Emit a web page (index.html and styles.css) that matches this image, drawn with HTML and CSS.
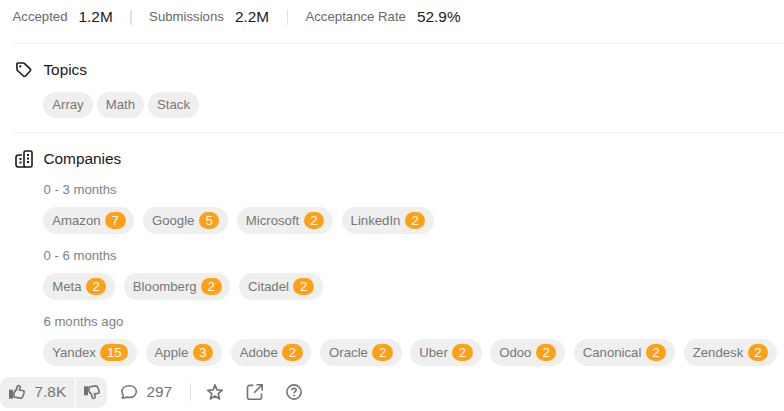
FILE: index.html
```html
<!DOCTYPE html>
<html lang="en">
<head>
<meta charset="utf-8">
<title>Problem details</title>
<link rel="stylesheet" href="styles.css">
</head>
<body>
<main class="details">
  <section class="stats">
    <span class="label">Accepted</span><span class="value">1.2M</span><i class="divider wide"></i>
    <span class="label">Submissions</span><span class="value">2.2M</span><i class="divider"></i>
    <span class="label">Acceptance Rate</span><span class="value">52.9%</span>
  </section>
  <section class="topics">
    <h2><svg viewBox="0 0 18 18"><path d="M1.900 3a1 1 0 0 1 1-1h5.400a1.500 1.500 0 0 1 1 .4l5.900 5.500a1.500 1.500 0 0 1 0 2.100l-4.700 5a1.500 1.500 0 0 1-2.100 0L2.500 9.500a1.500 1.500 0 0 1-.5-1z"/><circle class="solid" cx="5.300" cy="5.400" r="1.100"/></svg>Topics</h2>
    <div class="tags"><span class="pill">Array</span><span class="pill">Math</span><span class="pill">Stack</span></div>
  </section>
  <section class="companies">
    <h2><svg viewBox="0 0 18 18"><rect x="9" y="1" width="8" height="16" rx="1.6"/><path d="M7 5H3.300A2.300 2.300 0 0 0 1 7.300v7.400A2.300 2.300 0 0 0 3.300 17h7"/><path class="dots" d="M13 4v2M13 7.500v2M13 11v2M5.500 8v2M5.500 11.500v2"/></svg>Companies</h2>
    <h3>0 - 3 months</h3>
    <div class="row"><span class="pill">Amazon<b>7</b></span><span class="pill">Google<b>5</b></span><span class="pill">Microsoft<b>2</b></span><span class="pill">LinkedIn<b>2</b></span></div>
    <h3>0 - 6 months</h3>
    <div class="row"><span class="pill">Meta<b>2</b></span><span class="pill">Bloomberg<b>2</b></span><span class="pill">Citadel<b>2</b></span></div>
    <h3>6 months ago</h3>
    <div class="row"><span class="pill">Yandex<b>15</b></span><span class="pill">Apple<b>3</b></span><span class="pill">Adobe<b>2</b></span><span class="pill">Oracle<b>2</b></span><span class="pill">Uber<b>2</b></span><span class="pill">Odoo<b>2</b></span><span class="pill">Canonical<b>2</b></span><span class="pill">Zendesk<b>2</b></span></div>
  </section>
</main>
<footer class="actions">
  <button class="vote up"><svg viewBox="0 0 18 18"><path class="solid" d="M1 6.700h4v9H1z"/><path d="M6 9.200C8 8 8.900 6 9.300 3.500c.3-1.600 3.200-1 2.900 1.200-.1 1-.5 1.800-.9 2.500l3.300.3c1.300.1 1.900 1.100 1.500 2.300l-1.400 3.900c-.5 1.200-1.300 1.600-2.500 1.400L6 14z"/></svg>7.8K</button>
  <button class="vote down"><svg viewBox="0 0 18 18"><path class="solid" d="M1 3.300h4v9H1z"/><path d="M6 8.800c2 1.200 2.900 3.200 3.300 5.700.3 1.600 3.200 1 2.900-1.200-.1-1-.5-1.800-.9-2.500l3.300-.3c1.300-.1 1.900-1.100 1.500-2.300l-1.400-3.900c-.5-1.200-1.300-1.600-2.500-1.400L6 4z"/></svg></button>
  <button class="comment"><svg viewBox="0 0 18 18"><path d="M9.200 2.800c4.200 0 7.100 2.400 7.100 5.800s-2.900 5.900-7.100 5.900c-1 0-2-.2-2.800-.4-1.200.7-2.700 1-4.300.8.800-.8 1.300-1.700 1.300-2.600C2.400 11.300 2 10 2 8.600c0-3.400 3-5.800 7.200-5.800z"/></svg>297</button>
  <i class="divider"></i>
  <button class="star"><svg viewBox="0 0 18 18"><path d="m9 1.900 1.900 5 5.500.3-4.200 3.500 1.400 5.300L9 13l-4.600 3 1.400-5.300-4.200-3.500 5.500-.3z"/></svg></button>
  <button class="share"><svg viewBox="0 0 18 18"><path d="M7.300 2.400H3.500a2 2 0 0 0-2 2v9.800a2 2 0 0 0 2 2h10a2 2 0 0 0 2-2v-3.800M10.500 1.800h5.700v5.700M16 2l-7.800 7.800"/></svg></button>
  <button class="help"><svg viewBox="0 0 18 18"><circle cx="9" cy="9" r="7.100"/><path d="M6.900 7.300c0-2.700 4.300-2.600 4.300-.2 0 1.500-2.100 1.600-2.100 3"/><circle class="solid" cx="9.100" cy="12.500" r=".9"/></svg></button>
</footer>
</body>
</html>
```

FILE: styles.css
```css
* { box-sizing: border-box; }
body {
  margin: 0;
  width: 784px;
  height: 411px;
  overflow: hidden;
  background: #fff;
  color: #1a1a1a;
  font: 13.2px/17.6px "Liberation Sans", Arial, sans-serif;
}
svg {
  flex: none;
  width: 18px;
  height: 18px;
  fill: none;
  stroke: currentColor;
  stroke-width: 1.6;
  stroke-linejoin: round;
}
.solid { fill: currentColor; stroke: none; }
.details { padding-left: 12.5px; }
.stats {
  display: flex;
  align-items: center;
  height: 43px;
  padding-bottom: 9px;
}
.label { color: #696969; }
.value { margin-left: 11px; font-size: 15.4px; }
.divider { width: 1px; height: 15px; margin: 1px 17.8px 0 17.6px; background: #e2e2e2; }
.divider.wide { width: 1.5px; margin-right: 17.3px; }
.topics, .companies { border-top: 1px solid #efefef; }
.topics { height: 89px; padding-top: 15px; }
.companies { padding-top: 15px; }
h2 {
  display: flex;
  align-items: center;
  gap: 10.9px;
  height: 22px;
  margin: 0;
  padding-left: 2px;
  font-size: 15.4px;
  font-weight: 400;
}
.dots { stroke-width: 2; }
.tags, .row { display: flex; padding-left: 30.9px; }
.tags { gap: 4.4px; margin-top: 11px; }
.row { gap: 8.8px; margin-top: 8.4px; }
.pill {
  display: flex;
  align-items: center;
  flex: none;
  height: 26.4px;
  padding: 0 8.8px;
  border-radius: 14px;
  background: #efefef;
  color: #777;
}
.pill b {
  height: 17.6px;
  margin-left: 4.4px;
  padding: 0 6.6px;
  border-radius: 9px;
  background: #ffa116;
  color: #fff;
  font-weight: 400;
}
h3 {
  height: 17.6px;
  margin: 13.6px 0 0 30.9px;
  color: #808080;
  font-size: 13.2px;
  font-weight: 400;
}
h2 + h3 { margin-top: 11.2px; }
.actions { display: flex; align-items: center; height: 31px; margin-top: 11px; color: #737373; }
button {
  display: flex;
  align-items: center;
  height: 31px;
  margin: 0;
  padding: 0;
  border: 0;
  background: none;
  color: inherit;
  font: 15.4px/20px "Liberation Sans", Arial, sans-serif;
}
.vote { background: #efefef; }
.up { width: 75px; padding-left: 8px; gap: 8.5px; border-radius: 9px 0 0 9px; }
.down { width: 31px; margin-left: 1px; padding-left: 7px; border-radius: 0 9px 9px 0; }
.comment { width: 65px; margin-left: 13px; gap: 8.5px; }
.actions .divider { height: 18px; margin: 0 0 0 5px; }
.star { margin-left: 15px; }
.share { margin-left: 22px; }
.help { margin-left: 21px; }
```
